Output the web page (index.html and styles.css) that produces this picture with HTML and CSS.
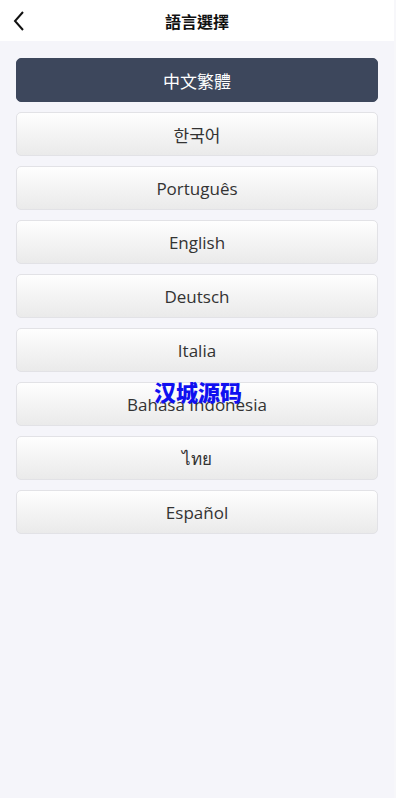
FILE: index.html
```html
<!DOCTYPE html>
<html lang="zh-Hant">
<head>
<meta charset="utf-8">
<link rel="stylesheet" href="styles.css">
</head>
<body>
<div class="page">
  <header class="topbar">
    <span class="back">
      <svg width="14" height="22" viewBox="0 0 14 22"><path d="M11 2 L3 11 L11 20" fill="none" stroke="#111" stroke-width="2"/></svg>
    </span>
    <h1 class="title">語言選擇</h1>
  </header>
  <main class="list">
    <div class="item active">中文繁體</div>
    <div class="item">한국어</div>
    <div class="item">Português</div>
    <div class="item">English</div>
    <div class="item">Deutsch</div>
    <div class="item">Italia</div>
    <div class="item">Bahasa Indonesia</div>
    <div class="item">ไทย</div>
    <div class="item">Español</div>
  </main>
  <div class="watermark">汉城源码</div>
</div>
</body>
</html>
```
FILE: styles.css
```css
html, body {
  margin: 0;
  padding: 0;
  background: #f7f7fa;
}
body {
  font-family: "Noto Sans", "Noto Sans CJK TC", sans-serif;
}
.page {
  position: relative;
  width: 394px;
  min-height: 798px;
  background: #f5f5fa;
}
.topbar {
  height: 41px;
  background: #fff;
  display: flex;
  align-items: center;
  justify-content: center;
  position: relative;
}
.back {
  position: absolute;
  left: 12px;
  top: 10px;
  display: flex;
}
.title {
  margin: 0;
  font-family: "Noto Sans CJK TC", sans-serif;
  font-size: 16px;
  font-weight: 700;
  color: #111;
}
.list {
  padding: 17px 16px;
  display: flex;
  flex-direction: column;
  gap: 10px;
}
.item {
  height: 42px;
  border: 1px solid #e2e2e6;
  border-radius: 5px;
  background: linear-gradient(#fefefe, #eaeaea);
  display: flex;
  align-items: center;
  justify-content: center;
  font-size: 17px;
  color: #333;
  font-family: "Open Sans", "Noto Sans", "Noto Sans CJK KR", sans-serif;
}
.item.active {
  background: #3d475c;
  border-color: #3d475c;
  color: #fff;
  font-family: "Noto Sans CJK TC", sans-serif;
}
.watermark {
  position: absolute;
  left: 154px;
  top: 375px;
  font-family: "Noto Sans CJK SC", sans-serif;
  font-weight: 900;
  font-size: 22px;
  color: #1010f0;
  letter-spacing: 0;
}
```
